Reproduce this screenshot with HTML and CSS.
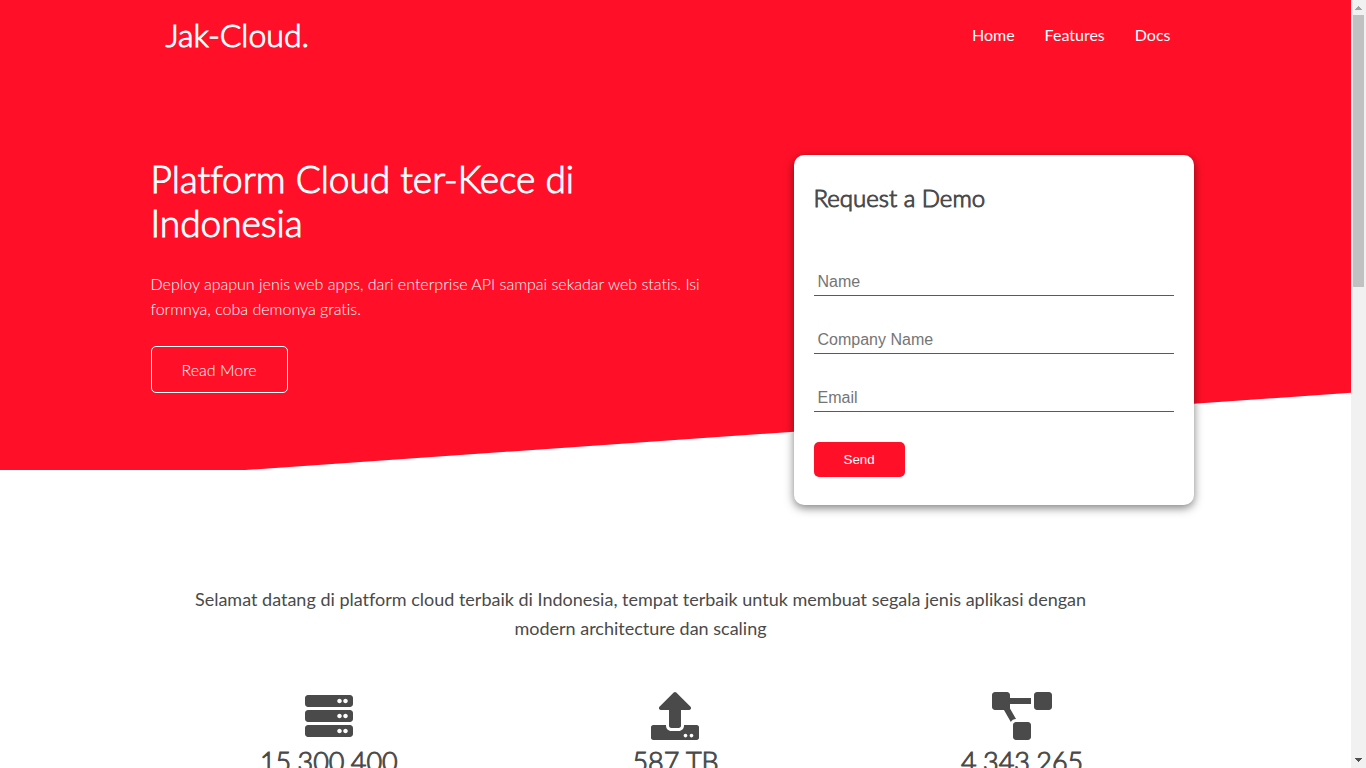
FILE: index.html
```html
<!DOCTYPE html>
<html lang="id">
<head>
<meta charset="utf-8">
<meta name="viewport" content="width=device-width, initial-scale=1">
<title>Jak-Cloud.</title>
<link rel="stylesheet" href="styles.css">
</head>
<body>
<div class="page">
  <header class="navbar">
    <div class="container navbar-inner">
      <h1 class="logo">Jak-Cloud.</h1>
      <nav>
        <ul class="menu">
          <li><a href="#home">Home</a></li>
          <li><a href="#features">Features</a></li>
          <li><a href="#docs">Docs</a></li>
        </ul>
      </nav>
    </div>
  </header>

  <section class="showcase" id="home">
    <div class="showcase-grid">
      <div class="showcase-text">
        <h2 class="headline">Platform Cloud ter-Kece di Indonesia</h2>
        <p class="lead">Deploy apapun jenis web apps, dari enterprise API sampai sekadar web statis. Isi formnya, coba demonya gratis.</p>
        <a class="btn btn-outline" href="#features">Read More</a>
      </div>
      <div class="card">
        <h2 class="card-title">Request a Demo</h2>
        <form class="demo-form">
          <input class="field" type="text" name="name" placeholder="Name" aria-label="Name">
          <input class="field" type="text" name="company" placeholder="Company Name" aria-label="Company Name">
          <input class="field" type="email" name="email" placeholder="Email" aria-label="Email">
          <button class="btn btn-primary" type="submit">Send</button>
        </form>
      </div>
    </div>
  </section>

  <section class="stats" id="features">
    <div class="container">
      <h3 class="stats-heading">Selamat datang di platform cloud terbaik di Indonesia, tempat terbaik untuk membuat segala jenis aplikasi dengan modern architecture dan scaling</h3>
      <div class="stats-grid">
        <div class="stat">
          <svg class="icon" viewBox="0 0 512 512" aria-hidden="true"><path d="M480 160H32c-17.673 0-32-14.327-32-32V64c0-17.673 14.327-32 32-32h448c17.673 0 32 14.327 32 32v64c0 17.673-14.327 32-32 32zm-48-88c-13.255 0-24 10.745-24 24s10.745 24 24 24 24-10.745 24-24-10.745-24-24-24zm-64 0c-13.255 0-24 10.745-24 24s10.745 24 24 24 24-10.745 24-24-10.745-24-24-24zm112 248H32c-17.673 0-32-14.327-32-32v-64c0-17.673 14.327-32 32-32h448c17.673 0 32 14.327 32 32v64c0 17.673-14.327 32-32 32zm-48-88c-13.255 0-24 10.745-24 24s10.745 24 24 24 24-10.745 24-24-10.745-24-24-24zm-64 0c-13.255 0-24 10.745-24 24s10.745 24 24 24 24-10.745 24-24-10.745-24-24-24zm112 248H32c-17.673 0-32-14.327-32-32v-64c0-17.673 14.327-32 32-32h448c17.673 0 32 14.327 32 32v64c0 17.673-14.327 32-32 32zm-48-88c-13.255 0-24 10.745-24 24s10.745 24 24 24 24-10.745 24-24-10.745-24-24-24zm-64 0c-13.255 0-24 10.745-24 24s10.745 24 24 24 24-10.745 24-24-10.745-24-24-24z"/></svg>
          <h3 class="stat-value">15.300.400</h3>
        </div>
        <div class="stat">
          <svg class="icon" viewBox="0 0 512 512" aria-hidden="true"><path d="M296 384h-80c-13.3 0-24-10.7-24-24V192h-87.7c-17.8 0-26.7-21.5-14.1-34.1L242.3 5.7c7.5-7.5 19.8-7.5 27.3 0l152.2 152.2c12.6 12.6 3.7 34.1-14.1 34.1H320v168c0 13.3-10.7 24-24 24zm216-8v112c0 13.3-10.7 24-24 24H24c-13.3 0-24-10.7-24-24V376c0-13.3 10.7-24 24-24h136v8c0 30.9 25.1 56 56 56h80c30.9 0 56-25.1 56-56v-8h136c13.3 0 24 10.7 24 24zm-124 88c0-11-9-20-20-20s-20 9-20 20 9 20 20 20 20-9 20-20zm64 0c0-11-9-20-20-20s-20 9-20 20 9 20 20 20 20-9 20-20z"/></svg>
          <h3 class="stat-value">587 TB</h3>
        </div>
        <div class="stat">
          <svg class="icon" viewBox="0 0 640 512" aria-hidden="true"><path d="M384 320H256c-17.67 0-32 14.33-32 32v128c0 17.67 14.33 32 32 32h128c17.67 0 32-14.33 32-32V352c0-17.67-14.33-32-32-32zM192 32c0-17.67-14.33-32-32-32H32C14.33 0 0 14.33 0 32v128c0 17.67 14.33 32 32 32h95.72l73.16 128.04C211.98 300.98 232.4 288 256 288h.28L192 175.51V128h224V64H192V32zM608 0H480c-17.67 0-32 14.33-32 32v128c0 17.67 14.33 32 32 32h128c17.67 0 32-14.33 32-32V32c0-17.67-14.33-32-32-32z"/></svg>
          <h3 class="stat-value">4.343.265</h3>
        </div>
      </div>
    </div>
  </section>
</div>

<div class="scrollbar" aria-hidden="true">
  <svg class="arrow arrow-up" viewBox="0 0 7 4"><path d="M3 0h1v1h1v1h1v1h1v1H0V3h1V2h1V1h1z"/></svg>
  <div class="thumb"></div>
  <svg class="arrow arrow-down" viewBox="0 0 7 4"><path d="M0 0h7v1H6v1H5v1H4v1H3V3H2V2H1V1H0z"/></svg>
</div>
</body>
</html>
```
FILE: styles.css
```css
:root {
  --red: #ff1028;
  --ink: #4a4a4a;
}

* {
  box-sizing: border-box;
  margin: 0;
  padding: 0;
}

body {
  display: flex;
  height: 100vh;
  overflow: hidden;
  background: #fff;
  color: var(--ink);
  font-family: Lato, sans-serif;
  font-size: 16px;
  font-weight: 300;
  font-variant-ligatures: none;
  line-height: 1.6;
}

h1,
h2,
h3 {
  font-weight: 300;
  -webkit-text-stroke: 1px currentColor;
}

a {
  color: inherit;
  text-decoration: none;
}

.page {
  flex: 1;
  min-width: 0;
  overflow: hidden;
}

.container {
  max-width: 1100px;
  margin: 0 auto;
  padding: 0 40px;
}

.navbar {
  height: 70px;
  background: var(--red);
  color: #fff;
}

.navbar-inner {
  display: flex;
  align-items: center;
  justify-content: space-between;
  height: 100%;
}

.logo {
  font-size: 32px;
  line-height: 38px;
}

.menu {
  display: flex;
  gap: 10px;
  list-style: none;
  padding: 0 5px;
  font-weight: 400;
}

.menu a {
  display: block;
  padding: 10px;
}

.showcase {
  position: relative;
  height: 400px;
  background: var(--red);
  color: #fff;
}

/* Slanted lower edge */
.showcase::after {
  content: "";
  position: absolute;
  right: 0;
  bottom: -70px;
  left: 0;
  height: 100px;
  background: #fff;
  transform: skewY(-4deg);
}

.showcase-grid {
  position: relative;
  z-index: 1;
  display: grid;
  grid-template-columns: 561px 1fr;
  gap: 30px;
  max-width: 1050px;
  height: 100%;
  margin: 0 auto;
}

.showcase-text {
  padding-top: 87px;
}

.headline {
  font-size: 37px;
  line-height: 44px;
}

.lead {
  margin: 26px 0 25px;
  line-height: 25px;
}

.btn {
  display: inline-block;
  border: 0;
  border-radius: 5px;
  padding: 10px 30px;
}

.btn-outline {
  border: 1px solid #fff;
  line-height: 25px;
}

.btn-primary {
  background: var(--red);
  color: #fff;
  font-family: "Liberation Sans", Arial, sans-serif;
}

.card {
  justify-self: end;
  width: 400px;
  height: 350px;
  margin: 85px 7px 0 0;
  padding: 25px 20px;
  border-radius: 10px;
  background: #fff;
  color: var(--ink);
  box-shadow: 0 3px 10px rgba(0, 0, 0, 0.5);
}

.card-title {
  margin-bottom: 52px;
  font-size: 24px;
  line-height: 36px;
}

.field {
  display: block;
  width: 100%;
  height: 28px;
  margin-bottom: 30px;
  padding: 3px 4px;
  border: 0;
  border-bottom: 1px solid var(--red);
  background: none;
  font: 16px "Liberation Sans", Arial, sans-serif;
}

.field::placeholder {
  color: #757575;
}

.stats {
  padding-top: 115px;
}

.stats-heading {
  max-width: 950px;
  font-size: 18px;
  font-weight: 400;
  line-height: 29px;
  text-align: center;
  -webkit-text-stroke: 0;
}

.stats-grid {
  display: grid;
  grid-template-columns: repeat(3, 1fr);
  gap: 20px;
  padding-top: 49px;
  text-align: center;
}

.icon {
  display: block;
  height: 48px;
  margin: 0 auto;
  fill: var(--ink);
}

.stat-value {
  font-size: 27px;
  line-height: 44px;
}

.scrollbar {
  display: flex;
  flex-direction: column;
  align-items: center;
  width: 15px;
  padding: 6px 0;
  background: #f1f1f1;
}

.thumb {
  width: 11px;
  height: 272px;
  margin-top: 5px;
  background: #c1c1c1;
}

.arrow {
  width: 7px;
  height: 4px;
  fill: #a3a3a3;
}

.arrow-down {
  margin-top: auto;
  fill: #505050;
}
```
